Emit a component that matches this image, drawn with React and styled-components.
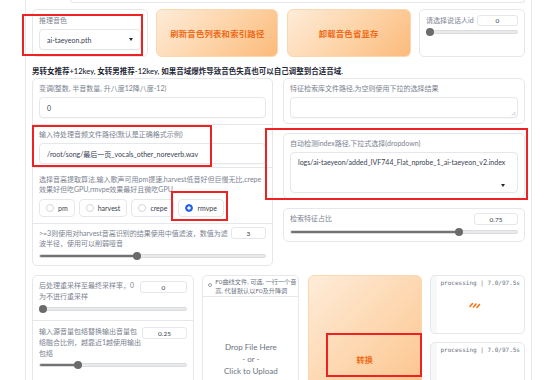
import React from "react";
import styled, { createGlobalStyle } from "styled-components";

// global //

const GlobalStyle = createGlobalStyle`
  html, body {
    margin: 0;
    padding: 0;
    background: #fff;
  }
  body {
    font-family: Lato, "Noto Sans CJK SC", sans-serif;
    color: #374151;
  }
  * {
    box-sizing: border-box;
  }
`;

// layout //

const Page = styled.div`
  position: relative;
  display: flex;
  width: 554px;
  height: 380px;
  overflow: hidden;
  background: #fff;
  padding-left: 25px;
`;

const Main = styled.div`
  flex: none;
  width: 507px;
  border-left: 1px solid #e5e7eb;
  border-right: 1px solid #e5e7eb;
  padding: 0 6px;
  display: flex;
  flex-direction: column;

  & > * {
    flex-shrink: 0;
  }
`;

const TopStub = styled.div`
  height: 3px;
  margin-left: 38px;
  border: 1px solid #e5e7eb;
  border-top: none;
  border-radius: 0 0 4px 4px;
`;

const TopRow = styled.div`
  display: grid;
  grid-template-columns: 116px 122px 124px 106px;
  justify-content: space-between;
  height: 48px;
  margin-top: 6px;
`;

const Block = styled.div`
  background: #fff;
  border: 1px solid #e5e7eb;
  border-radius: 5px;
  padding: ${(p) => p.$pad || "5px 6px"};
`;

const Label = styled.div`
  font-size: 7px;
  line-height: ${(p) => p.$lh || 9}px;
  color: #7b8290;
  white-space: nowrap;
`;

const Field = styled.div`
  height: ${(p) => p.$h || 21}px;
  margin-top: 4px;
  border: 1px solid #e5e7eb;
  border-radius: 4px;
  padding: 0 7px;
  display: flex;
  align-items: center;
  justify-content: space-between;
  font-size: 7px;
  color: #374151;
  background: #fff;
  box-shadow: 0 1px 1px rgba(0, 0, 0, 0.03);
  white-space: nowrap;
`;

const Caret = styled.span`
  width: 0;
  height: 0;
  border-left: 2.5px solid transparent;
  border-right: 2.5px solid transparent;
  border-top: 3px solid #1f2937;
`;

const OrangeButton = styled.div`
  display: flex;
  align-items: center;
  justify-content: center;
  height: ${(p) => p.$h || "auto"};
  border-radius: 6px;
  border: 1px solid #fcd6ae;
  background: linear-gradient(135deg, #feecd9 0%, #fdd2a5 55%, #fbba7b 100%);
  color: #ef6a17;
  font-weight: 700;
  font-size: ${(p) => p.$fs || 8.4}px;
  letter-spacing: 0.2px;
`;

const LabelRow = styled.div`
  display: flex;
  justify-content: space-between;
  align-items: flex-start;
`;

const NumberBox = styled.div`
  flex: none;
  width: ${(p) => p.$w}px;
  height: ${(p) => p.$h || 12}px;
  margin-top: ${(p) => p.$mt || 0}px;
  border: 1px solid #e5e7eb;
  border-radius: 3px;
  display: flex;
  align-items: center;
  justify-content: center;
  font-size: 6.5px;
  color: #374151;
  background: #fff;
`;

const SliderBox = styled.div`
  position: relative;
  height: 8px;
  margin-top: ${(p) => p.$mt || 3}px;
  display: flex;
  align-items: center;
`;

const Track = styled.div`
  width: 100%;
  height: 4px;
  border-radius: 2px;
  background: #e9eaec;
  border: 1px solid #dcdde0;
  overflow: hidden;
`;

const TrackFill = styled.div`
  height: 100%;
  background: #727272;
`;

const Thumb = styled.div`
  position: absolute;
  top: 0;
  width: 8px;
  height: 8px;
  border-radius: 50%;
  background: #6b6b6b;
`;

const Instruction = styled.div`
  margin-top: 10px;
  font-size: 7.5px;
  line-height: 10px;
  font-weight: 600;
  color: #1f2937;
  white-space: nowrap;
`;

const MidGrid = styled.div`
  display: grid;
  grid-template-columns: 241px 242px;
  justify-content: space-between;
  align-items: start;
  margin-top: 1px;
`;

const Column = styled.div`
  border: 1px solid #e5e7eb;
  border-radius: 5px;
  overflow: hidden;
  background: #fff;
`;

const Section = styled.div`
  padding: ${(p) => p.$pad || "5px 6px"};
  border-bottom: ${(p) => (p.$last ? "none" : "1px solid #e5e7eb")};
  overflow: hidden;
`;

const RightStack = styled.div`
  display: flex;
  flex-direction: column;
  gap: 9px;
`;

const RadioRow = styled.div`
  display: flex;
  gap: 4px;
  margin-top: 5px;
`;

const RadioPill = styled.div`
  display: flex;
  align-items: center;
  gap: 4px;
  height: 18px;
  padding: 0 6px 0 6px;
  border: 1px solid #e5e7eb;
  border-radius: 4px;
  font-size: 7px;
  color: #374151;
  background: #fff;
`;

const RadioDot = styled.span`
  width: 8px;
  height: 8px;
  border-radius: 50%;
  border: 1px solid ${(p) => (p.$on ? "#2563eb" : "#d1d5db")};
  background: ${(p) =>
    p.$on ? "radial-gradient(circle, #fff 0 1.4px, #2563eb 1.8px)" : "#fff"};
`;

const IndexSelect = styled.div`
  height: 41px;
  margin-top: 4px;
  border: 1px solid #e5e7eb;
  border-radius: 4px;
  padding: 5px 12px 0 7px;
  display: flex;
  flex-direction: column;
  font-size: 7px;
  line-height: 9px;
  color: #374151;
  white-space: nowrap;
`;

const IndexCaret = styled(Caret)`
  align-self: flex-end;
  margin-top: 17px;
`;

const TextArea = styled(Field)`
  position: relative;
`;

const Grip = styled.svg`
  position: absolute;
  right: 1px;
  bottom: 1px;
`;

const BottomRow = styled.div`
  display: grid;
  grid-template-columns: 162px 97px 114px 95px;
  justify-content: space-between;
  align-items: start;
  margin-top: 9px;
`;

const Upload = styled.div`
  height: 150px;
  border: 1px solid #e5e7eb;
  border-radius: 5px;
  display: flex;
  flex-direction: column;
  background: #fff;
`;

const UploadHead = styled.div`
  display: flex;
  gap: 3px;
  padding: 2px 2px 0 5px;
  height: 21px;
  border-bottom: 1px solid #e5e7eb;
  border-radius: 5px 5px 0 0;
  font-size: 6.2px;
  line-height: 8.5px;
  color: #6b7280;
  white-space: nowrap;
`;

const HeadIcon = styled.span`
  flex: none;
  width: 4px;
  height: 4px;
  margin-top: 5px;
  border: 0.8px solid #9ca3af;
  border-radius: 50%;
`;

const DropZone = styled.div`
  flex: 1;
  display: flex;
  flex-direction: column;
  align-items: center;
  justify-content: center;
  padding-bottom: 4px;
  font-size: 8px;
  line-height: 12px;
  color: #6b7280;
`;

const OutputStack = styled.div`
  display: flex;
  flex-direction: column;
  gap: 8px;
`;

const OutputBox = styled.div`
  height: 59px;
  border: 1px solid #e5e7eb;
  border-radius: 5px;
  display: flex;
  flex-direction: column;
  align-items: flex-end;
  padding: 3px 4px 0 0;
  background: linear-gradient(to right, #f7f8fa 0 6px, #fff 6px);
`;

const Timer = styled.div`
  font-family: "DejaVu Sans Mono", "Liberation Mono", monospace;
  font-size: 6px;
  line-height: 8px;
  color: #6b7280;
  white-space: nowrap;
`;

const Loader = styled.svg`
  align-self: center;
  margin-top: 14px;
`;

const Mark = styled.div`
  position: absolute;
  left: ${(p) => p.$x}px;
  top: ${(p) => p.$y}px;
  width: ${(p) => p.$w}px;
  height: ${(p) => p.$h}px;
  border: 2px solid #ee2222;
  pointer-events: none;
`;

function RangeSlider({ pct, mt }) {
  return (
    <SliderBox $mt={mt}>
      <Track>
        <TrackFill style={{ width: `calc(4px + (100% - 8px) * ${pct / 100})` }} />
      </Track>
      <Thumb style={{ left: `calc((100% - 8px) * ${pct / 100})` }} />
    </SliderBox>
  );
}

const methods = ["pm", "harvest", "crepe", "rmvpe"];

function App() {
  return (
    <Page>
      <GlobalStyle />
      <Main>
        <TopStub />
        <TopRow>
          <Block $pad="5px 6px">
            <Label $lh={10}>推理音色</Label>
            <Field>
              ai-taeyeon.pth
              <Caret />
            </Field>
          </Block>
          <OrangeButton>刷新音色列表和索引路径</OrangeButton>
          <OrangeButton>卸载音色省显存</OrangeButton>
          <Block $pad="5px 6px">
            <LabelRow>
              <Label $lh={11}>请选择说话人id</Label>
              <NumberBox $w={41} $h={11}>0</NumberBox>
            </LabelRow>
            <RangeSlider pct={0} mt={2} />
          </Block>
        </TopRow>

        <Instruction>
          男转女推荐+12key, 女转男推荐-12key, 如果音域爆炸导致音色失真也可以自己调整到合适音域.
        </Instruction>

        <MidGrid>
          <Column>
            <Section $pad="5px 6px 6px">
              <Label>变调(整数, 半音数量, 升八度12降八度-12)</Label>
              <Field>0</Field>
            </Section>
            <Section $pad="5px 6px 3px">
              <Label>输入待处理音频文件路径(默认是正确格式示例)</Label>
              <Field>/root/song/最后一页_vocals_other_noreverb.wav</Field>
            </Section>
            <Section $pad="6px 6px 6px">
              <Label $lh={10}>
                选择音高提取算法,输入歌声可用pm提速,harvest低音好但巨慢无比,crepe
                <br />
                效果好但吃GPU,rmvpe效果最好且微吃GPU
              </Label>
              <RadioRow>
                {methods.map((m) => (
                  <RadioPill key={m}>
                    <RadioDot $on={m === "rmvpe"} />
                    {m}
                  </RadioPill>
                ))}
              </RadioRow>
            </Section>
            <Section $pad="4px 6px 5px" $last>
              <LabelRow>
                <Label $lh={10}>
                  &gt;=3则使用对harvest音高识别的结果使用中值滤波，数值为滤
                  <br />
                  波半径，使用可以削弱哑音
                </Label>
                <NumberBox $w={35} $mt={-1}>3</NumberBox>
              </LabelRow>
              <RangeSlider pct={43} mt={4} />
            </Section>
          </Column>

          <RightStack>
            <Block $pad="5px 6px 5px">
              <Label>特征检索库文件路径,为空则使用下拉的选择结果</Label>
              <TextArea>
                <Grip width="5" height="5" viewBox="0 0 5 5">
                  <path d="M4.5 1 L1 4.5 M4.5 3 L3 4.5" stroke="#9ca3af" strokeWidth="0.6" />
                </Grip>
              </TextArea>
            </Block>
            <Block $pad="5px 6px 5px">
              <Label>自动检测index路径,下拉式选择(dropdown)</Label>
              <IndexSelect>
                logs/ai-taeyeon/added_IVF744_Flat_nprobe_1_ai-taeyeon_v2.index
                <IndexCaret />
              </IndexSelect>
            </Block>
            <Block $pad="4px 6px 5px">
              <LabelRow>
                <Label $lh={11}>检索特征占比</Label>
                <NumberBox $w={44}>0.75</NumberBox>
              </LabelRow>
              <RangeSlider pct={75} mt={3} />
            </Block>
          </RightStack>
        </MidGrid>

        <BottomRow>
          <Column>
            <Section $pad="4px 6px 7px">
              <LabelRow>
                <Label $lh={11}>
                  后处理重采样至最终采样率，0
                  <br />
                  为不进行重采样
                </Label>
                <NumberBox $w={47} $mt={1}>0</NumberBox>
              </LabelRow>
              <RangeSlider pct={0} mt={3} />
            </Section>
            <Section $pad="5px 6px 20px" $last>
              <LabelRow>
                <Label $lh={11}>
                  输入源音量包络替换输出音量包
                  <br />
                  络融合比例，越靠近1越使用输出
                  <br />
                  包络
                </Label>
                <NumberBox $w={45} $mt={1}>0.25</NumberBox>
              </LabelRow>
              <RangeSlider pct={25} mt={2} />
            </Section>
          </Column>

          <Upload>
            <UploadHead>
              <HeadIcon />
              <div>
                F0曲线文件, 可选, 一行一个音
                <br />
                高, 代替默认以F0及升降调
              </div>
            </UploadHead>
            <DropZone>
              <span>Drop File Here</span>
              <span>- or -</span>
              <span>Click to Upload</span>
            </DropZone>
          </Upload>

          <OrangeButton $h="168px" $fs={8}>
            转换
          </OrangeButton>

          <OutputStack>
            <OutputBox>
              <Timer>processing | 7.0/97.5s</Timer>
              <Loader width="14" height="8" viewBox="0 0 14 8">
                <path
                  d="M2 5.5 L4.5 2.5 M5.5 6 L8 3 M9 6.5 L11.5 3.5"
                  stroke="#f97316"
                  strokeWidth="1.6"
                  strokeLinecap="round"
                />
              </Loader>
            </OutputBox>
            <OutputBox>
              <Timer>processing | 7.0/97.5s</Timer>
            </OutputBox>
          </OutputStack>
        </BottomRow>
      </Main>

      <Mark $x={22} $y={14} $w={121} $h={42} />
      <Mark $x={32} $y={125} $w={180} $h={42} />
      <Mark $x={265} $y={128} $w={263} $h={72} />
      <Mark $x={171} $y={191} $w={57} $h={30} />
      <Mark $x={326} $y={333} $w={96} $h={44} />
    </Page>
  );
}

export default App;
